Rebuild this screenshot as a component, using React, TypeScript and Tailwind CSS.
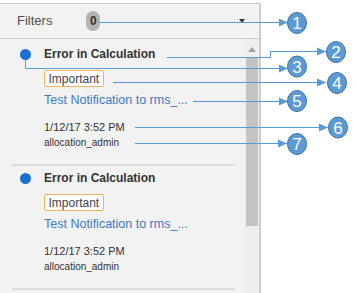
import React from "react";

type Note = {
  id: string;
  title: string;
  tag: string;
  message: string;
  time: string;
  user: string;
};

const NOTES: Note[] = [
  {
    id: "n1",
    title: "Error in Calculation",
    tag: "Important",
    message: "Test Notification to rms_...",
    time: "1/12/17 3:52 PM",
    user: "allocation_admin",
  },
  {
    id: "n2",
    title: "Error in Calculation",
    tag: "Important",
    message: "Test Notification to rms_...",
    time: "1/12/17 3:52 PM",
    user: "allocation_admin",
  },
];

// callout lines: polyline points, then the circle they point to
const CALLOUTS: { pts: [number, number][]; cx: number; cy: number; n: number }[] = [
  { pts: [[99, 22.5], [288, 22.5]], cx: 297, cy: 23, n: 1 },
  { pts: [[167, 57.5], [270.5, 57.5], [270.5, 51.5], [326, 51.5]], cx: 336, cy: 52, n: 2 },
  { pts: [[25.5, 60], [25.5, 68.5], [288, 68.5]], cx: 297, cy: 66.5, n: 3 },
  { pts: [[113, 82.5], [326, 82.5]], cx: 337, cy: 83, n: 4 },
  { pts: [[193, 101.5], [288, 101.5]], cx: 297, cy: 101, n: 5 },
  { pts: [[135, 127.5], [328, 127.5]], cx: 338, cy: 127.5, n: 6 },
  { pts: [[135, 143.5], [287, 143.5]], cx: 297, cy: 144, n: 7 },
];

function NoteCard({ note }: { note: Note }) {
  return (
    <div className="pt-[4px]">
      <div className="flex pl-[20px]">
        <div className="h-[16px] flex items-center">
          <span className="block w-[11px] h-[11px] rounded-full bg-[#1b70d2]" />
        </div>
        <div className="ml-[13px] flex flex-col items-start pb-[14px]">
          <div className="h-[16px] leading-[16px] text-[12px] font-bold text-[#333]">
            {note.title}
          </div>
          <div className="mt-[8px] h-[17px] px-[3.5px] flex items-center border-[1.5px] border-[#f2b35c] rounded-[2px] bg-white text-[12px] text-[#444]">
            {note.tag}
          </div>
          <div className="mt-[5px] h-[16px] leading-[16px] text-[12.5px] text-[#3d7bc6]">
            {note.message}
          </div>
          <div className="mt-[12px] h-[14px] leading-[14px] text-[11px] text-[#333]">
            {note.time}
          </div>
          <div className="mt-[2px] h-[14px] leading-[14px] text-[10px] text-[#333]">
            {note.user}
          </div>
        </div>
      </div>
      <div className="ml-[12px] mr-[10px] h-[2px] bg-[#dcdcdc]" />
    </div>
  );
}

function Callouts() {
  return (
    <svg
      className="absolute inset-0 pointer-events-none"
      width={356}
      height={293}
      viewBox="0 0 356 293"
    >
      {CALLOUTS.map((c) => {
        const last = c.pts[c.pts.length - 1];
        return (
          <g key={c.n}>
            <polyline
              points={c.pts.map((p) => p.join(",")).join(" ")}
              fill="none"
              stroke="#5b9bd5"
              strokeWidth={1}
            />
            <polygon
              points={`${last[0]},${last[1]} ${last[0] - 9},${last[1] - 4} ${last[0] - 9},${last[1] + 4}`}
              fill="#5b9bd5"
            />
            <ellipse cx={c.cx} cy={c.cy} rx={9.5} ry={10.5} fill="#5b9bd5" stroke="#41719c" strokeWidth={1} />
            <text
              x={c.cx}
              y={c.cy + 6}
              textAnchor="middle"
              fill="#fff"
              fontSize={17}
              fontFamily="'Liberation Sans', Arial, sans-serif"
            >
              {c.n}
            </text>
          </g>
        );
      })}
    </svg>
  );
}

export default function App() {
  return (
    <div className="relative w-[356px] h-[293px] bg-white overflow-hidden font-['Liberation_Sans',Arial,sans-serif]">
      <div className="mt-[3px] w-[261px] h-[290px] bg-[#f2f2f2] border-t border-t-[#cbcbcb] border-r-2 border-r-[#cdcdcd] flex flex-col">
        <div className="h-[35px] shrink-0 flex items-center border-b border-b-[#cbcbcb] pl-[17px] pr-[14px]">
          <span className="text-[13px] text-[#505050]">Filters</span>
          <span className="ml-[34px] w-[14px] h-[20px] rounded-[7px] bg-[#b3b3b3] flex items-center justify-center text-[12px] font-bold text-[#333]">
            0
          </span>
          <span className="ml-auto w-0 h-0 border-l-[3px] border-r-[3px] border-t-[4px] border-l-transparent border-r-transparent border-t-[#333]" />
        </div>
        <div className="flex flex-1 min-h-0">
          <div className="flex-1 pt-[3px] overflow-hidden">
            {NOTES.map((n) => (
              <NoteCard key={n.id} note={n} />
            ))}
          </div>
          <div className="w-[14px] bg-[#eeeeee] flex flex-col items-center">
            <span className="mt-[8px] w-0 h-0 border-l-[4.5px] border-r-[4.5px] border-b-[5px] border-l-transparent border-r-transparent border-b-[#a3a3a3]" />
            <span className="mt-[5px] w-[12px] h-[169px] bg-[#c4c4c4]" />
          </div>
        </div>
      </div>
      <Callouts />
    </div>
  );
}
